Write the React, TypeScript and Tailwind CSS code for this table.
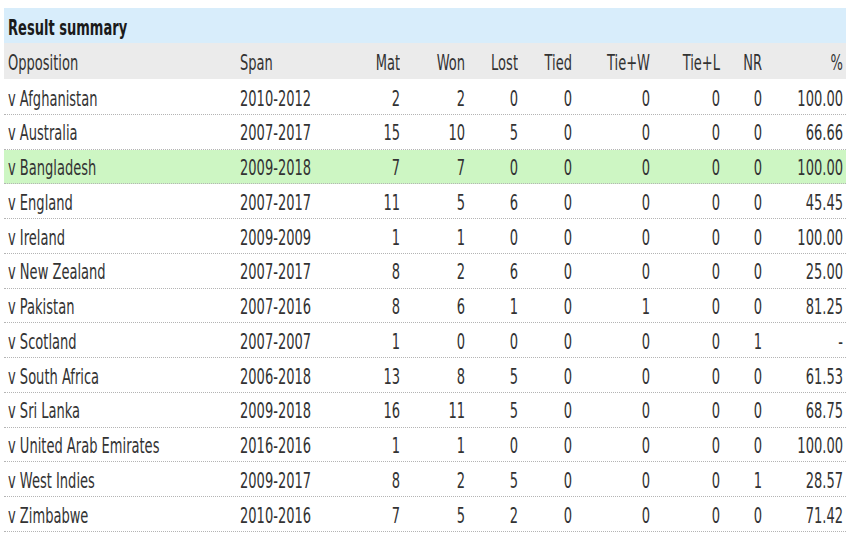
const cols = ['Opposition', 'Span', 'Mat', 'Won', 'Lost', 'Tied', 'Tie+W', 'Tie+L', 'NR', '%'];

const rows: string[][] = [
  ['v Afghanistan', '2010-2012', '2', '2', '0', '0', '0', '0', '0', '100.00'],
  ['v Australia', '2007-2017', '15', '10', '5', '0', '0', '0', '0', '66.66'],
  ['v Bangladesh', '2009-2018', '7', '7', '0', '0', '0', '0', '0', '100.00'],
  ['v England', '2007-2017', '11', '5', '6', '0', '0', '0', '0', '45.45'],
  ['v Ireland', '2009-2009', '1', '1', '0', '0', '0', '0', '0', '100.00'],
  ['v New Zealand', '2007-2017', '8', '2', '6', '0', '0', '0', '0', '25.00'],
  ['v Pakistan', '2007-2016', '8', '6', '1', '0', '1', '0', '0', '81.25'],
  ['v Scotland', '2007-2007', '1', '0', '0', '0', '0', '0', '1', '-'],
  ['v South Africa', '2006-2018', '13', '8', '5', '0', '0', '0', '0', '61.53'],
  ['v Sri Lanka', '2009-2018', '16', '11', '5', '0', '0', '0', '0', '68.75'],
  ['v United Arab Emirates', '2016-2016', '1', '1', '0', '0', '0', '0', '0', '100.00'],
  ['v West Indies', '2009-2017', '8', '2', '5', '0', '0', '0', '1', '28.57'],
  ['v Zimbabwe', '2010-2016', '7', '5', '2', '0', '0', '0', '0', '71.42'],
];

const grid =
  'grid grid-cols-[232px_100px_60px_65px_53px_54px_78px_70px_42px_81px] items-center pl-[4px] pt-[4px]';

function Cell({ text, i }: { text: string; i: number }) {
  return (
    <div className={i < 2 ? 'text-left' : 'text-right'}>
      <span className="inline-block scale-y-[1.45] whitespace-nowrap">{text}</span>
    </div>
  );
}

export default function App() {
  return (
    <div
      className="w-[850px] h-[550px] bg-white px-[4px] pt-[8px] text-[14.5px] leading-none text-[#333]"
      style={{ fontFamily: '"DejaVu Sans Condensed", "DejaVu Sans", sans-serif' }}
    >
      <div className="flex h-[35px] items-center bg-[#d8edfb] pl-[4px] pt-[5px]">
        <span className="inline-block scale-y-[1.45] font-bold text-[#1a1a1a]">Result summary</span>
      </div>
      <div className={`${grid} h-[36px] bg-[#ebebeb]`}>
        {cols.map((c, i) => (
          <Cell key={c} text={c} i={i} />
        ))}
      </div>
      <div className="h-px bg-white" />
      {rows.map((r) => (
        <div
          key={r[0]}
          className={`${grid} h-[34.75px] border-b border-dotted border-[#b4b4b4] ${
            r[0] === 'v Bangladesh' ? 'bg-[#cdf6c3]' : ''
          }`}
        >
          {r.map((v, i) => (
            <Cell key={i} text={v} i={i} />
          ))}
        </div>
      ))}
    </div>
  );
}
